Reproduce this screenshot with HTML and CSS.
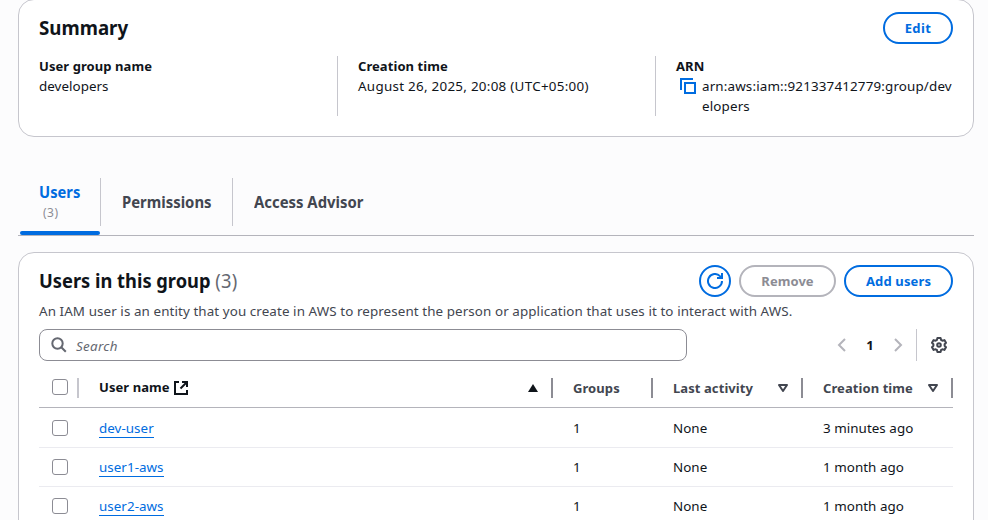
FILE: index.html
```html
<!DOCTYPE html>
<html lang="en">
<head>
<meta charset="utf-8">
<title>User group</title>
<link rel="stylesheet" href="styles.css">
</head>
<body>
<main class="page">
  <section class="card summary">
    <header class="card-head">
      <h2 class="title title-summary">Summary</h2>
      <button class="btn btn-edit">Edit</button>
    </header>
    <div class="facts">
      <div class="fact"><div class="label">User group name</div><div class="value">developers</div></div>
      <div class="fact"><div class="label">Creation time</div><div class="value v-date">August 26, 2025, 20:08 (UTC+05:00)</div></div>
      <div class="fact"><div class="label">ARN</div>
        <div class="arn">
          <svg class="copy" width="16" height="16" viewBox="0 0 16 16" fill="none" stroke="#006ce0" stroke-width="2"><path d="M1 12V1h12"/><path d="M5 5h10v10H5z"/></svg>
          <span class="value v-arn">arn:aws:iam::921337412779:group/dev<br>elopers</span>
        </div>
      </div>
    </div>
  </section>

  <nav class="tabs">
    <a class="tab active"><span class="tab-name">Users</span><span class="tab-count">(3)</span></a>
    <a class="tab tab-perm"><span class="tab-name">Permissions</span></a>
    <a class="tab tab-adv"><span class="tab-name">Access Advisor</span></a>
  </nav>

  <section class="card users">
    <header class="card-head">
      <h2 class="title title-users">Users in this group <span class="count">(3)</span></h2>
      <div class="actions">
        <button class="btn btn-icon"><svg width="16" height="16" viewBox="0 0 16 16" fill="none" stroke="#006ce0" stroke-width="2"><path d="M15 8a7 7 0 1 1-2-4.900L15 5"/><path d="M15 0v5h-5"/></svg></button>
        <button class="btn btn-remove" disabled>Remove</button>
        <button class="btn btn-add">Add users</button>
      </div>
    </header>
    <p class="desc">An IAM user is an entity that you create in AWS to represent the person or application that uses it to interact with AWS.</p>
    <div class="tools">
      <div class="search">
        <svg width="16" height="16" viewBox="0 0 16 16" fill="none" stroke="#656871" stroke-width="2"><circle cx="6.5" cy="6.5" r="5.2"/><path d="M10.3 10.3l4.500 4.500"/></svg>
        <span class="placeholder">Search</span>
      </div>
      <div class="pager">
        <svg width="16" height="16" viewBox="0 0 16 16" fill="none" stroke="#b4b4bb" stroke-width="2"><path d="M11 2L5 8l6 6"/></svg>
        <span class="page-no">1</span>
        <svg width="16" height="16" viewBox="0 0 16 16" fill="none" stroke="#b4b4bb" stroke-width="2"><path d="M5 2l6 6-6 6"/></svg>
      </div>
      <div class="prefs">
        <svg width="16" height="16" viewBox="0 0 16 16" fill="none" stroke="#424650" stroke-width="2" stroke-linejoin="round"><path d="M6.400 1h3.200l.5 2 1.300.7 2-.6L15 5.800l-1.400 1.500v1.400L15 10.200l-1.600 2.700-2-.6-1.300.7-.5 2H6.400l-.5-2-1.300-.7-2 .6L1 10.200l1.400-1.500V7.300L1 5.800l1.600-2.700 2 .6L5.900 3z"/><circle cx="8" cy="8" r="1.800"/></svg>
      </div>
    </div>
    <div class="table">
      <div class="row head">
        <div class="check"><i class="box"></i><i class="sep light"></i></div>
        <div class="cell sorted"><span class="h-user">User name</span>
          <svg class="ext" width="14" height="14" viewBox="0 0 14 14" fill="none" stroke="#0f141a" stroke-width="2"><path d="M5 1H1v12h12V9"/><path d="M8 1h5v5"/><path d="M13 1L6.500 7.500"/></svg>
          <svg class="sort" width="10" height="8" viewBox="0 0 10 8"><path d="M5 0l5 8H0z" fill="#0f141a"/></svg><i class="sep"></i></div>
        <div class="cell"><span>Groups</span><i class="sep"></i></div>
        <div class="cell"><span>Last activity</span><svg class="sort" width="10" height="8" viewBox="0 0 10 8" fill="none" stroke="#424650" stroke-width="2" stroke-linejoin="round"><path d="M1 1h8L5 7z"/></svg><i class="sep"></i></div>
        <div class="cell"><span>Creation time</span><svg class="sort" width="10" height="8" viewBox="0 0 10 8" fill="none" stroke="#424650" stroke-width="2" stroke-linejoin="round"><path d="M1 1h8L5 7z"/></svg><i class="sep"></i></div>
      </div>
      <div class="row first">
        <div class="check"><i class="box"></i></div>
        <div class="cell name"><a class="link">dev-user</a></div><div class="cell">1</div><div class="cell">None</div><div class="cell">3 minutes ago</div>
      </div>
      <div class="row">
        <div class="check"><i class="box"></i></div>
        <div class="cell name"><a class="link">user1-aws</a></div><div class="cell">1</div><div class="cell">None</div><div class="cell">1 month ago</div>
      </div>
      <div class="row">
        <div class="check"><i class="box"></i></div>
        <div class="cell name"><a class="link">user2-aws</a></div><div class="cell">1</div><div class="cell">None</div><div class="cell">1 month ago</div>
      </div>
    </div>
  </section>
</main>
</body>
</html>
```
FILE: styles.css
```css
* { box-sizing: border-box; }
html, body { margin: 0; height: 520px; overflow: hidden; }
body { background: #fcfcfd; color: #0f141a; font: 13.4px/20px "Noto Sans", sans-serif; letter-spacing: 0.04px; }
.page { padding: 0 14px 0 18px; margin-top: -1px; display: flex; flex-direction: column; }
.card { background: #fff; border: 1px solid #c6c6cd; border-radius: 16px; padding: 0 20px; }
.summary { height: 138px; padding-top: 12px; }
.card-head { display: flex; justify-content: space-between; align-items: center; height: 32px; }
.title { margin: 0; font-size: 20px; line-height: 24px; font-weight: 700; letter-spacing: 0; white-space: nowrap; transform: scaleX(0.935); transform-origin: left; }
.title-users { transform: scaleX(0.914); }
.count { font-weight: 400; color: #656871; letter-spacing: 0.3px; }
.btn { height: 32px; border: 2px solid #006ce0; border-radius: 20px; background: #fff; color: #006ce0; font: 700 13px/20px "Noto Sans", sans-serif; letter-spacing: 0.06px; padding: 0; white-space: nowrap; display: flex; align-items: center; justify-content: center; }
.btn-edit { width: 70px; letter-spacing: 0.4px; }
.btn-icon { width: 32px; }
.btn-remove { width: 97px; color: #8c8c94; border-color: #b4b4bb; }
.btn-add { width: 109px; letter-spacing: 0.15px; }
.actions { display: flex; gap: 8px; }
.facts { display: grid; grid-template-columns: 298px 318px 298px; height: 60px; margin-top: 12px; white-space: nowrap; }
.fact + .fact { border-left: 1px solid #c6c6cd; padding-left: 20px; }
.label { font-size: 13px; font-weight: 700; letter-spacing: 0.07px; }
.v-date { letter-spacing: 0.28px; }
.v-arn { letter-spacing: 0.15px; }
.arn { display: flex; }
.copy { margin: 2px 6px 0 4px; flex: none; }
.tabs { display: flex; height: 58px; margin-top: 41px; padding-left: 2px; border-bottom: 1px solid #b4b4bb; color: #424650; }
.tab { display: flex; align-items: center; height: 48px; }
.tab-name { font-size: 16px; font-weight: 700; letter-spacing: 0; white-space: nowrap; transform: scaleX(0.93); transform-origin: left; }
.tab.active { flex-direction: column; align-items: flex-start; width: 80px; height: 57px; padding: 4px 0 0 19px; color: #006ce0; position: relative; }
.active .tab-name { transform: scaleX(0.92); }
.tab.active::after { content: ""; position: absolute; left: 0; right: 0; bottom: 0; height: 4px; border-radius: 2px; background: #006ce0; }
.tab-count { font-size: 12px; color: #8c8c94; margin: 1px 0 0 4px; letter-spacing: 0.5px; }
.tab-perm { border-left: 1px solid #c6c6cd; border-right: 1px solid #c6c6cd; width: 133px; padding-left: 21px; }
.tab-adv { padding-left: 20.5px; }
.users { height: 284px; margin-top: 16px; padding-top: 12px; }
.desc { margin: 4px 0 8px; color: #424650; white-space: nowrap; letter-spacing: 0.09px; }
.tools { display: flex; height: 32px; }
.search { width: 648px; border: 1px solid #8c8c94; border-radius: 8px; display: flex; align-items: center; padding-left: 12px; gap: 8px; color: #656871; font-style: italic; }
.search svg { margin: 0 1px 0 -1px; }
.placeholder { padding-top: 2px; letter-spacing: 0.3px; }
.pager { display: flex; align-items: center; margin-left: 147px; width: 72px; justify-content: space-between; font-size: 13px; font-weight: 700; }
.prefs { border-left: 1px solid #c6c6cd; margin-left: 10px; padding: 8px 0 0 14px; }
.table { margin-top: 7px; }
.row { display: grid; grid-template-columns: 39px 475px 100px 150px 150px; height: 39px; border-bottom: 1px solid #ebebf0; }
.check, .cell { display: flex; align-items: flex-start; padding-top: 9px; }
.row.first { height: 40px; padding-top: 1px; }
.row.head { height: 40px; border-color: #b4b4bb; color: #424650; font-size: 13px; font-weight: 700; letter-spacing: 0.08px; }
.head .check, .head .cell { padding-top: 10px; }
.check { padding-left: 13px; }
.box { width: 16px; height: 16px; margin-top: 2px; border: 1px solid #8c8c94; border-radius: 3px; }
.head .box { margin-top: 1px; }
.cell { padding-left: 20px; white-space: nowrap; }
.cell.name, .cell.sorted { padding-left: 21px; }
.sep { width: 2px; height: 20px; background: #8c8c94; margin-left: auto; }
.sep.light { background: #c6c6cd; margin-right: -1px; }
.sort { margin: 6px 0 0 auto; }
.sort + .sep { margin-left: 13px; }
.sorted { color: #0f141a; }
.h-user { margin-top: -1px; }
.ext { margin: 3px 0 0 4px; }
.link { color: #006ce0; box-shadow: inset 0 -1px #006ce0; }
```
